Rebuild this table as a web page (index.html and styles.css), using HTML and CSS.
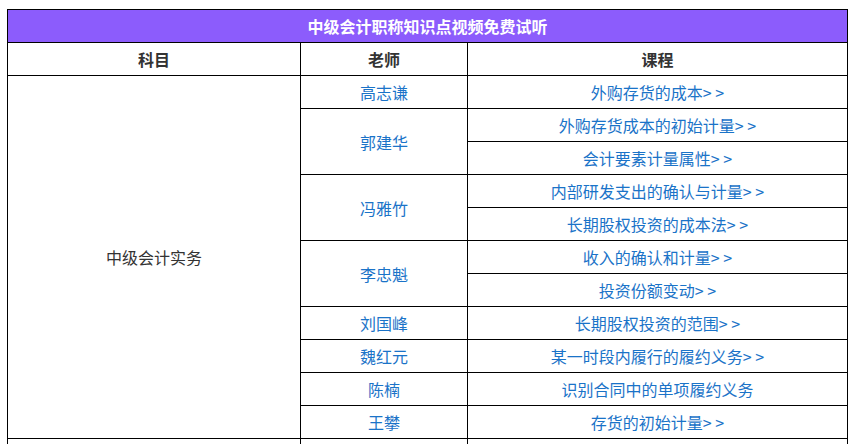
FILE: index.html
```html
<!DOCTYPE html>
<html lang="zh-CN">
<head>
<meta charset="utf-8">
<title>中级会计职称知识点视频免费试听</title>
<link rel="stylesheet" href="styles.css">
</head>
<body>
<div class="wrap">
<table class="course-table">
  <colgroup>
    <col class="c1">
    <col class="c2">
    <col class="c3">
  </colgroup>
  <thead>
    <tr class="title-row"><th colspan="3">中级会计职称知识点视频免费试听</th></tr>
    <tr class="head-row"><th>科目</th><th>老师</th><th>课程</th></tr>
  </thead>
  <tbody>
    <tr>
      <td rowspan="11" class="subject">中级会计实务</td>
      <td class="link">高志谦</td>
      <td class="link">外购存货的成本&gt; &gt;</td>
    </tr>
    <tr>
      <td rowspan="2" class="link">郭建华</td>
      <td class="link">外购存货成本的初始计量&gt; &gt;</td>
    </tr>
    <tr><td class="link">会计要素计量属性&gt; &gt;</td></tr>
    <tr>
      <td rowspan="2" class="link">冯雅竹</td>
      <td class="link">内部研发支出的确认与计量&gt; &gt;</td>
    </tr>
    <tr><td class="link">长期股权投资的成本法&gt; &gt;</td></tr>
    <tr>
      <td rowspan="2" class="link">李忠魁</td>
      <td class="link">收入的确认和计量&gt; &gt;</td>
    </tr>
    <tr><td class="link">投资份额变动&gt; &gt;</td></tr>
    <tr><td class="link">刘国峰</td><td class="link">长期股权投资的范围&gt; &gt;</td></tr>
    <tr><td class="link">魏红元</td><td class="link">某一时段内履行的履约义务&gt; &gt;</td></tr>
    <tr><td class="link">陈楠</td><td class="link">识别合同中的单项履约义务</td></tr>
    <tr><td class="link">王攀</td><td class="link">存货的初始计量&gt; &gt;</td></tr>
    <tr class="next-row"><td>&nbsp;</td><td>&nbsp;</td><td>&nbsp;</td></tr>
  </tbody>
</table>
</div>
</body>
</html>
```
FILE: styles.css
```css
html, body {
  margin: 0;
  padding: 0;
  background: #ffffff;
}

.wrap {
  padding: 9px 0 0 7px;
}

.course-table {
  width: 840px;
  border-collapse: collapse;
  table-layout: fixed;
  font-family: "Microsoft YaHei", "Noto Sans CJK SC", "Noto Sans", sans-serif;
  font-size: 16px;
}

.c1 { width: 293px; }
.c2 { width: 167px; }
.c3 { width: 380px; }

.course-table th,
.course-table td {
  border: 1px solid #000000;
  height: 32px;
  padding: 0;
  text-align: center;
  vertical-align: middle;
  line-height: 20px;
}

.title-row th {
  background: #8c5cfc;
  color: #ffffff;
  font-weight: bold;
}

.head-row th {
  color: #333333;
  font-weight: bold;
}

.subject {
  color: #333333;
}

.link {
  color: #1a73c8;
}
```
